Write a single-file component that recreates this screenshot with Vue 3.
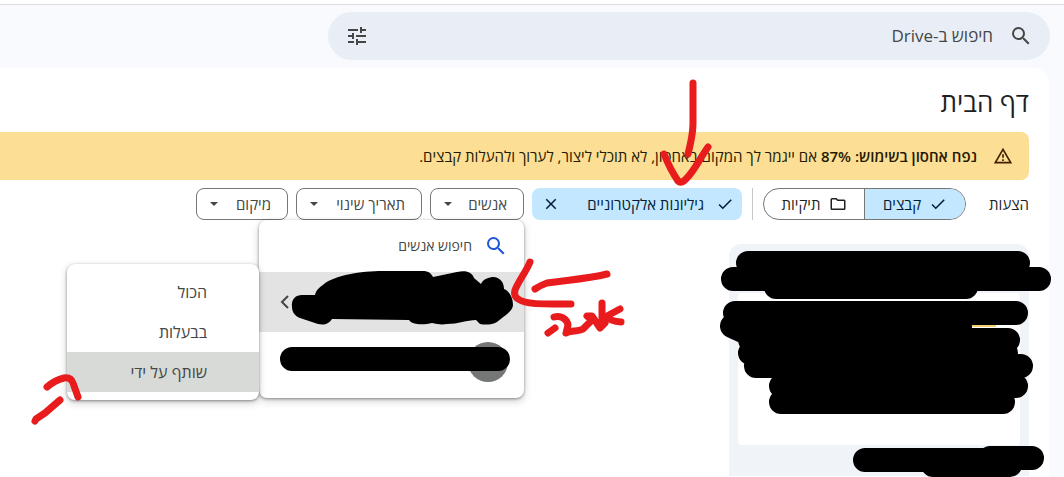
<script setup>
import { ref } from 'vue'

const query = ref('')
const people = ref('')
const accessOptions = ['הכול', 'בבעלות', 'שותף על ידי']
const active = ref('שותף על ידי')
</script>

<template>
  <div class="page" dir="rtl">
    <header class="top">
      <form class="search" @submit.prevent>
        <button class="icon-btn" type="submit" aria-label="חיפוש">
          <svg viewBox="0 0 24 24" width="24" height="24"><path d="M15.5 14h-.79l-.28-.27A6.47 6.47 0 0 0 16 9.5 6.5 6.5 0 1 0 9.5 16c1.61 0 3.09-.59 4.23-1.57l.27.28v.79l5 4.99L20.49 19zm-6 0a4.5 4.5 0 1 1 0-9 4.5 4.5 0 0 1 0 9z" /></svg>
        </button>
        <input v-model="query" type="text" aria-label="חיפוש ב-Drive" placeholder="חיפוש ב-Drive" />
        <button class="icon-btn" type="button" aria-label="חיפוש מתקדם">
          <svg viewBox="0 0 24 24" width="24" height="24"><path d="M3 17v2h6v-2zm0-12v2h10V5zm10 16v-2h8v-2h-8v-2h-2v6zM7 9v2H3v2h4v2h2V9zm14 4v-2H11v2zm-6-4h2V7h4V5h-4V3h-2z" /></svg>
        </button>
      </form>
    </header>

    <main class="panel">
      <h1>דף הבית</h1>

      <div class="banner">
        <svg viewBox="0 0 24 24" width="20" height="20"><path d="M12 5.99 19.53 19H4.47zM12 2 1 21h22zm1 14h-2v2h2zm0-6h-2v4h2z" /></svg>
        <p><b>נפח אחסון בשימוש: 87%</b> אם ייגמר לך המקום באחסון, לא תוכלי ליצור, לערוך ולהעלות קבצים.</p>
      </div>

      <div class="filters">
        <span class="hint">הצעות</span>
        <div class="segment">
          <button class="on" type="button">
            <svg viewBox="0 0 24 24" width="18" height="18"><path d="M9 16.17 4.83 12l-1.42 1.41L9 19 21 7l-1.41-1.41z" /></svg>
            קבצים
          </button>
          <button type="button">
            <svg viewBox="0 0 24 24" width="18" height="18"><path d="M9.17 6l2 2H20v10H4V6zM10 4H4a2 2 0 0 0-2 2v12c0 1.100.9 2 2 2h16a2 2 0 0 0 2-2V8a2 2 0 0 0-2-2h-8z" /></svg>
            תיקיות
          </button>
        </div>
        <span class="divider"></span>
        <button class="chip selected" type="button">
          <svg viewBox="0 0 24 24" width="18" height="18"><path d="M9 16.17 4.83 12l-1.42 1.41L9 19 21 7l-1.41-1.41z" /></svg>
          <span>גיליונות אלקטרוניים</span>
          <svg class="end" viewBox="0 0 24 24" width="18" height="18"><path d="M19 6.41 17.59 5 12 10.59 6.410 5 5 6.410 10.590 12 5 17.590 6.410 19 12 13.410 17.590 19 19 17.590 13.410 12z" /></svg>
        </button>
        <div class="anchor">
          <button class="chip people" type="button">
            <span>אנשים</span>
            <svg class="end" viewBox="0 0 18 18" width="18" height="18"><path d="M5 7l4 4 4-4z" /></svg>
          </button>
          <section class="menu">
            <div class="find">
              <svg viewBox="0 0 24 24" width="24" height="24"><path d="M15.5 14h-.79l-.28-.27A6.47 6.47 0 0 0 16 9.5 6.5 6.5 0 1 0 9.5 16c1.61 0 3.09-.59 4.23-1.57l.27.28v.79l5 4.99L20.49 19zm-6 0a4.5 4.5 0 1 1 0-9 4.5 4.5 0 0 1 0 9z" /></svg>
              <input v-model="people" type="text" aria-label="חיפוש אנשים" placeholder="חיפוש אנשים" />
            </div>
            <button class="person current" type="button" aria-label="איש קשר ראשון">
              <svg viewBox="0 0 10 16" width="10" height="16"><path d="M8 2 2 8l6 6" fill="none" stroke="#444746" stroke-width="2" /></svg>
            </button>
            <button class="person" type="button" aria-label="איש קשר שני"><span class="avatar"></span></button>
          </section>
          <section class="submenu">
            <button v-for="o in accessOptions" :key="o" type="button" :class="{ active: o === active }" @click="active = o">{{ o }}</button>
          </section>
        </div>
        <button class="chip modified" type="button">
          <span>תאריך שינוי</span>
          <svg class="end" viewBox="0 0 18 18" width="18" height="18"><path d="M5 7l4 4 4-4z" /></svg>
        </button>
        <button class="chip location" type="button">
          <span>מיקום</span>
          <svg class="end" viewBox="0 0 18 18" width="18" height="18"><path d="M5 7l4 4 4-4z" /></svg>
        </button>
      </div>

      <article class="card">
        <div class="preview"><span class="bar"></span></div>
      </article>
    </main>

    <svg class="ink" viewBox="0 0 1064 477" width="1064" height="477" aria-hidden="true">
      <g class="marker">
        <path d="M748 263H1018M733 279H1039M776 287H966M735 313H1016M732 326L743 331M745 327H960M750 340H1008M750 353H1006M756 366H1021M781 386H1016M781 402H1003M865 460H1010M990 458H1032M933 465H1010M292 359H498" />
      </g>
      <path d="M292 307C291 300 295 295 302 295H315C316 290 320 287 324 284C336 275 360 271 383 271H423C428 271 431 273 433 277L457 272C466 270 472 272 474 278L481 284C483 279 489 277 494 277C501 278 504 283 504 289C509 291 513 297 513 305C513 311 504 316 497 322C492 325 485 325 480 324L476 320C467 320 458 324 447 324C441 325 437 324 432 323C424 325 412 325 409 320L332 319C328 325 323 325 318 324L300 318C295 316 292 312 292 307Z" />
      <g class="pen">
        <path d="M693 83V123C693 136 690 145 688 154" />
        <path d="M664 154C668 164 674 175 678 181Q681 184 686 179C695 170 700 158 708 147" />
        <path d="M530 262C526 272 519 280 515 290C513 297 518 300 525 302C535 305 550 304 571 304" />
        <path d="M607 274C587 279 567 280 547 283Q541 285 535 289" />
        <path d="M548 333L555 328M554 317C561 315 567 319 568 325L566 333C571 330 578 332 583 329L592 320L587 316H592L600 328L605 323M602 303V325M620 309L607 316Q609 321 621 322" />
        <path d="M47 387Q55 380 64 378Q71 377 73 383L78 397" />
        <path d="M60 400L45 413L36 419L35 421" />
      </g>
    </svg>
  </div>
</template>

<style>
body {
  margin: 0;
}
</style>

<style scoped>
.page {
  position: relative;
  display: flex;
  flex-direction: column;
  min-height: 100vh;
  overflow: hidden;
  box-sizing: border-box;
  border-top: 4px solid #fff;
  background: #f8fafd;
  color: #1f1f1f;
  font-family: "Open Sans", "Noto Sans", sans-serif;
  font-size: 15px;
  line-height: 20px;
}
button,
input {
  font: inherit;
  color: inherit;
  border: 0;
  padding: 0;
  background: none;
  outline: 0;
}
svg {
  display: block;
  flex: none;
  fill: currentColor;
}
.top {
  border-top: 1px solid #dadce0;
  padding: 7px 14px 8px 328px;
}
.search {
  display: flex;
  align-items: center;
  gap: 16px;
  height: 48px;
  padding: 0 17px;
  border-radius: 24px;
  background: #e9eef6;
  color: #444746;
}
.search input {
  flex: 1;
  min-width: 0;
  font-size: 17px;
}
input::placeholder {
  color: #444746;
  opacity: 1;
}
.panel {
  flex: 1;
  margin-right: 15px;
  padding-right: 20px;
  border-top-right-radius: 16px;
  background: #fff;
}
h1 {
  margin: 0;
  padding: 18px 0 14px;
  font-size: 26px;
  line-height: 32px;
  font-weight: 400;
}
.banner {
  display: flex;
  align-items: center;
  gap: 16px;
  height: 48px;
  padding: 0 16px;
  border-radius: 0 8px 8px 0;
  background: #fcde95;
  color: #421f00;
}
.banner p {
  margin: 0;
  color: #241a00;
  white-space: nowrap;
}
.banner b {
  font-weight: 600;
}
.filters {
  display: flex;
  align-items: center;
  gap: 8px;
  padding: 8px 0 24px;
  font-weight: 500;
}
.hint {
  flex: none;
  width: 55px;
}
.segment {
  display: flex;
  flex: none;
  box-sizing: border-box;
  width: 203px;
  height: 32px;
  overflow: hidden;
  border: 1px solid #747775;
  border-radius: 16px;
}
.segment button {
  display: flex;
  flex: 1;
  align-items: center;
  justify-content: center;
  gap: 8px;
}
.segment .on {
  border-left: 1px solid #747775;
  background: #c2e7ff;
  color: #001d35;
}
.divider {
  flex: none;
  width: 1px;
  height: 32px;
  margin: 0 2px;
  background: #c4c7c5;
}
.chip {
  display: flex;
  flex: none;
  align-items: center;
  box-sizing: border-box;
  height: 32px;
  padding: 0 16px 0 8px;
  border: 1px solid #747775;
  border-radius: 8px;
  color: #444746;
  white-space: nowrap;
}
.chip .end {
  margin-right: auto;
}
.selected {
  width: 210px;
  gap: 12px;
  padding: 0 8px 0 10px;
  border: 0;
  background: #c2e7ff;
  color: #001d35;
}
.people {
  width: 94px;
}
.modified {
  width: 126px;
}
.location {
  width: 92px;
}
.anchor {
  position: relative;
}
.menu,
.submenu {
  position: absolute;
  z-index: 1;
  border-radius: 8px;
  background: #fff;
  box-shadow: 0 1px 3px rgba(0, 0, 0, 0.4), 0 3px 8px rgba(0, 0, 0, 0.18);
  font-weight: 400;
}
.menu {
  top: 32px;
  right: 0;
  width: 265px;
  padding-bottom: 6px;
}
.find {
  display: flex;
  align-items: center;
  gap: 12px;
  height: 52px;
  padding: 0 16px;
}
.find svg {
  color: #1f55d6;
}
.find input {
  flex: 1;
  min-width: 0;
  font-size: 14px;
}
.person {
  display: flex;
  align-items: center;
  box-sizing: border-box;
  width: 100%;
  height: 60px;
  padding: 0 16px 0 21px;
}
.current {
  justify-content: flex-end;
  background: #e3e3e3;
}
.avatar {
  width: 40px;
  height: 40px;
  border-radius: 50%;
  background: #747775;
}
.submenu {
  top: 76px;
  right: 265px;
  width: 192px;
  padding: 8px 0;
}
.submenu button {
  display: block;
  width: 100%;
  height: 40px;
  padding: 0 52px;
  font-size: 16px;
  text-align: right;
  color: #444746;
}
.submenu .active {
  background: #d8dad7;
}
.card {
  box-sizing: border-box;
  width: 300px;
  height: 232px;
  padding: 49px 9px 0;
  border-radius: 12px 12px 0 0;
  background: #f0f4f9;
}
.preview {
  height: 152px;
  border-radius: 4px;
  background: #fff;
  overflow: hidden;
}
.bar {
  display: block;
  width: 24px;
  height: 2px;
  margin: 32px 24px 0;
  background: #f6cf70;
}
.ink {
  position: absolute;
  z-index: 2;
  top: -4px;
  right: 0;
  fill: #000;
  pointer-events: none;
}
.marker {
  fill: none;
  stroke: #000;
  stroke-width: 24;
  stroke-linecap: round;
}
.pen {
  fill: none;
  stroke: #e81c1c;
  stroke-width: 7;
  stroke-linecap: round;
  stroke-linejoin: round;
}
</style>
